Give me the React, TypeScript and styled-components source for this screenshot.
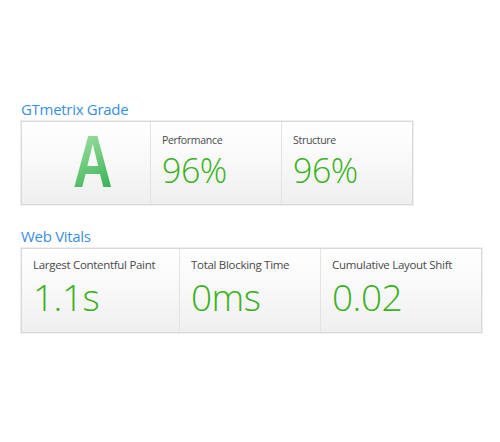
import React from 'react'
import styled, { createGlobalStyle } from 'styled-components'

const GlobalStyle = createGlobalStyle`
  html, body {
    margin: 0;
    padding: 0;
    background: #ffffff;
  }
  body {
    font-family: "Open Sans", "Liberation Sans", sans-serif;
  }
`

const StyledPage = styled.div`
  width: 500px;
  height: 442px;
  box-sizing: border-box;
  padding: 99px 0 0 20px;
  display: flex;
  flex-direction: column;
  gap: 21px;
`

const StyledSection = styled.section`
  display: flex;
  flex-direction: column;
  gap: 2px;
`

const StyledTitle = styled.h2`
  margin: 0;
  padding-left: 1px;
  font-size: 15px;
  line-height: 20px;
  font-weight: 400;
  color: #3a8fe0;
  letter-spacing: -0.3px;
`

const StyledBox = styled.div<{ columns: string; boxHeight: number }>`
  display: grid;
  grid-template-columns: ${({ columns }) => columns};
  height: ${({ boxHeight }) => boxHeight}px;
  margin-left: 1px;
  width: fit-content;
  border: 1px solid #d9d9d9;
  box-shadow: 0 0 0 1px #efefef;
  background: linear-gradient(to bottom, #ffffff 0%, #f9f9f9 45%, #efefef 100%);
`

const StyledCell = styled.div<{ topPad: number }>`
  display: flex;
  flex-direction: column;
  padding: ${({ topPad }) => topPad}px 0 0 11px;
  border-left: 1px solid #e3e3e3;
  box-sizing: border-box;

  &:first-child {
    border-left: none;
  }
`

const StyledGradeCell = styled.div`
  display: flex;
  align-items: flex-start;
  justify-content: center;
  padding-left: 14px;
`

const StyledGrade = styled.span`
  display: block;
  margin-top: -1px;
  font-family: "Liberation Sans", Arial, sans-serif;
  font-size: 74px;
  line-height: 82px;
  font-weight: 700;
  transform: scaleX(0.74);
  background: linear-gradient(160deg, #b3e4b4 0%, #74cd80 45%, #1fa748 100%);
  -webkit-background-clip: text;
  background-clip: text;
  color: transparent;
`

const StyledLabel = styled.span<{ size: number; lh: number }>`
  font-size: ${({ size }) => size}px;
  line-height: ${({ lh }) => lh}px;
  color: #4a4a4a;
  letter-spacing: -0.3px;
  white-space: nowrap;
`

const StyledValue = styled.span<{ size: number }>`
  font-size: ${({ size }) => size}px;
  line-height: 1.36;
  font-weight: 300;
  color: #3ab221;
  letter-spacing: -0.5px;
  white-space: nowrap;
`

type Metric = { label: string; value: string }

const gradeMetrics: Metric[] = [
  { label: 'Performance', value: '96%' },
  { label: 'Structure', value: '96%' },
]

const vitals: Metric[] = [
  { label: 'Largest Contentful Paint', value: '1.1s' },
  { label: 'Total Blocking Time', value: '0ms' },
  { label: 'Cumulative Layout Shift', value: '0.02' },
]

const App: React.FC = () => {
  return (
    <>
      <GlobalStyle />
      <StyledPage>
        <StyledSection>
          <StyledTitle>GTmetrix Grade</StyledTitle>
          <StyledBox columns="128px 131px 131px" boxHeight={82}>
            <StyledGradeCell>
              <StyledGrade>A</StyledGrade>
            </StyledGradeCell>
            {gradeMetrics.map((m) => (
              <StyledCell key={m.label} topPad={11}>
                <StyledLabel size={10.5} lh={14}>{m.label}</StyledLabel>
                <StyledValue size={34}>{m.value}</StyledValue>
              </StyledCell>
            ))}
          </StyledBox>
        </StyledSection>
        <StyledSection>
          <StyledTitle>Web Vitals</StyledTitle>
          <StyledBox columns="157px 141px 161px" boxHeight={83}>
            {vitals.map((m) => (
              <StyledCell key={m.label} topPad={8}>
                <StyledLabel size={11.5} lh={15}>{m.label}</StyledLabel>
                <StyledValue size={37}>{m.value}</StyledValue>
              </StyledCell>
            ))}
          </StyledBox>
        </StyledSection>
      </StyledPage>
    </>
  )
}

export default App
